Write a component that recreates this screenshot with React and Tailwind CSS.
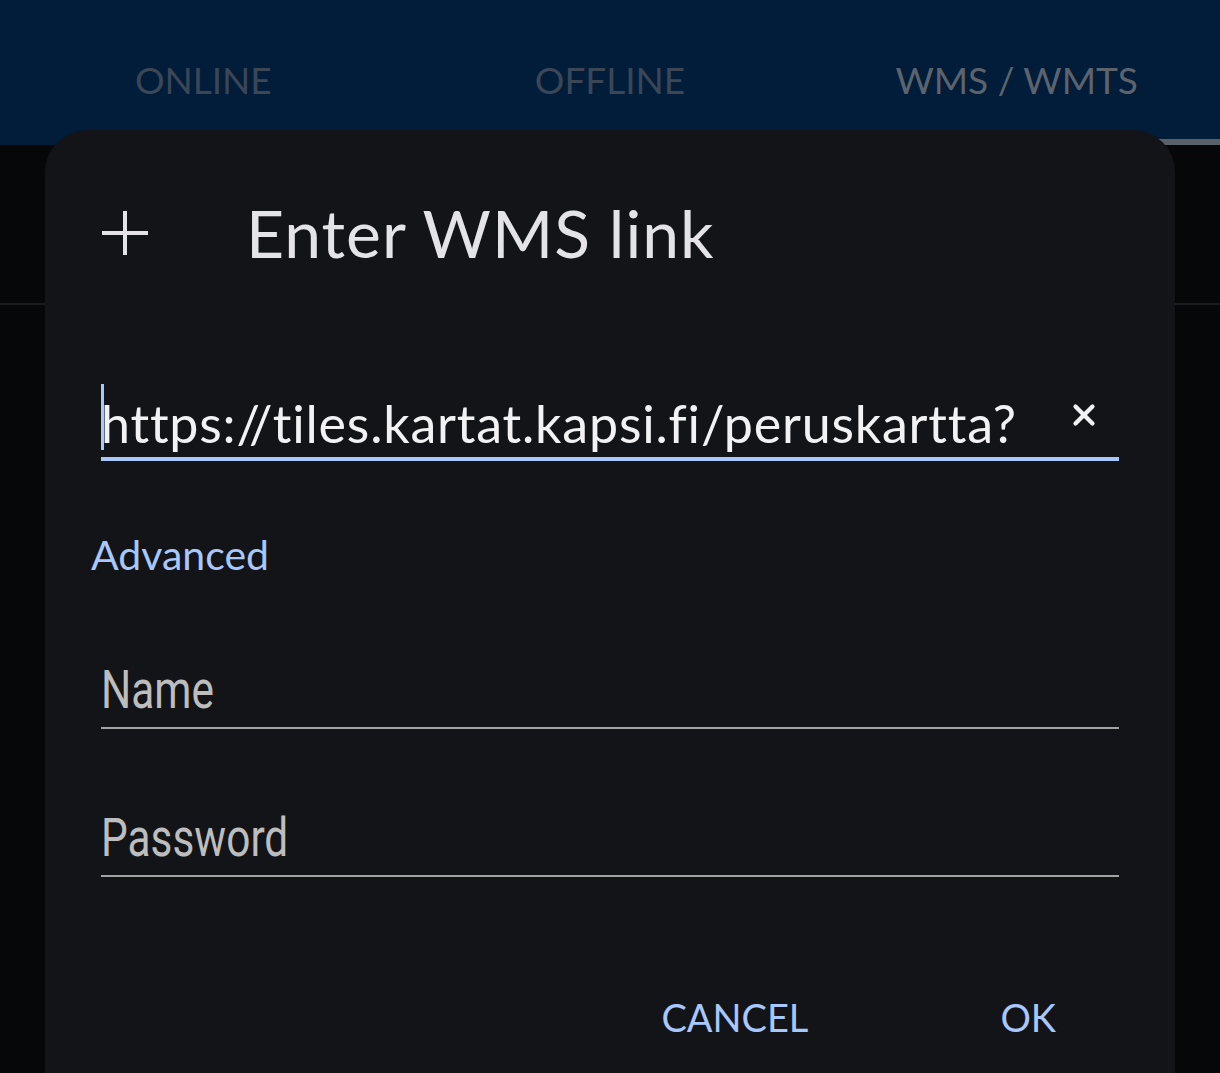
import { X } from 'lucide-react';

const TABS = [
  { label: 'ONLINE', color: 'text-[#3b4656]' },
  { label: 'OFFLINE', color: 'text-[#3b4656]' },
  { label: 'WMS / WMTS', color: 'text-[#5d636d]', active: true },
];

const sans = { fontFamily: 'Lato, "Open Sans", sans-serif' };

// Underlined text field with a narrow Roboto hint
function Field({ label, className = '' }) {
  return (
    <div className={`h-[72px] flex items-end border-b-2 border-[#a3a3a3] ${className}`}>
      <span
        className="block text-[53px] leading-[60px] text-[#bdbdbd] origin-left scale-x-[0.8] pb-[7px]"
        style={{ fontFamily: 'Roboto, sans-serif' }}
      >
        {label}
      </span>
    </div>
  );
}

export default function App() {
  return (
    <div className="relative w-[1220px] h-[1073px] overflow-hidden bg-[#060709]" style={sans}>
      {/* ── App bar with tabs ─────────────────────────────── */}
      <div className="h-[145px] bg-[#011d39] grid grid-cols-3">
        {TABS.map((t) => (
          <div key={t.label} className="relative flex items-center justify-center pt-[14px]">
            <span className={`text-[37px] ${t.color}`}>{t.label}</span>
            {t.active && (
              <div className="absolute left-0 right-0 bottom-0 h-[6px] bg-[#5a606a]" />
            )}
          </div>
        ))}
      </div>
      <div className="h-[158px]" />
      <div className="h-[2px] bg-[#1b1c20]" />

      {/* ── Dialog ────────────────────────────────────────── */}
      <div className="absolute left-[45px] top-[130px] w-[1130px] h-[1000px] rounded-[42px] bg-[#131418] px-[56px]">
        <div className="flex items-center h-[72px] mt-[67px]">
          <svg width="48" height="48" viewBox="0 0 48 48" className="shrink-0">
            <path d="M24 2v44M1 24h46" stroke="#e4e4e8" strokeWidth="4" />
          </svg>
          <h1 className="ml-[97px] text-[66px] leading-[72px] text-[#e4e3e8] tracking-[1px]">
            Enter WMS link
          </h1>
        </div>

        {/* URL input */}
        <div className="mt-[108px] h-[84px] flex items-end border-b-4 border-[#a8c7fa]">
          <div className="relative flex-1 flex items-end">
            <div className="absolute left-0 bottom-[7px] w-[3px] h-[66px] bg-[#a8c7fa]" />
            <span className="text-[52px] leading-[60px] text-[#f2f2f4] pb-[4px] whitespace-nowrap tracking-[0.8px] [font-variant-ligatures:none]">
              https://tiles.kartat.kapsi.fi/peruskartta?
            </span>
          </div>
          <X size={34} strokeWidth={3} color="#f2f2f4" className="mb-[25px] mr-[18px]" />
        </div>

        <div className="mt-[70px] -ml-[10px] text-[41px] leading-[48px] text-[#a8c7fa]">Advanced</div>

        <Field label="Name" className="mt-[78px]" />
        <Field label="Password" className="mt-[76px]" />

        <div className="mt-[116px] flex justify-end gap-[192px] pr-[63px] text-[38px] leading-[48px] text-[#a8c7fa]">
          <span>CANCEL</span>
          <span>OK</span>
        </div>
      </div>
    </div>
  );
}
